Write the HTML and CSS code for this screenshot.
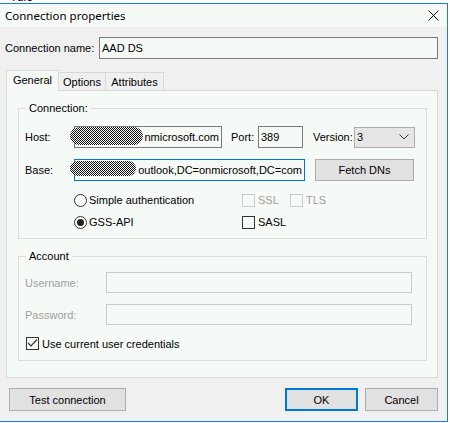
FILE: index.html
```html
<!DOCTYPE html>
<html lang="en">
<head>
    <meta charset="UTF-8">
    <title>Connection properties</title>
    <link rel="stylesheet" href="styles.css">
</head>
<body>
    <div class="behind"><span>Tulo</span></div>

    <div class="window">
        <div class="titlebar">
            <span class="title">Connection properties</span>
            <svg class="close" width="11" height="11" viewBox="0 0 11 11">
                <path d="M0.5 0.5 L10.5 10.5 M10.5 0.5 L0.5 10.5" stroke="#000" stroke-width="1" fill="none"/>
            </svg>
        </div>

        <div class="name-row">
            <label class="name-label">Connection name:</label>
            <div class="input name-input"><span class="value">AAD DS</span></div>
        </div>

        <div class="tabs">
            <div class="tab active">General</div>
            <div class="tab tab-options">Options</div>
            <div class="tab tab-attrs">Attributes</div>
        </div>

        <div class="panel">
            <div class="group">
                <div class="legend">Connection:</div>

                <div class="row host-row">
                    <label class="lbl lbl-main">Host:</label>
                    <div class="input host-input">
                        <span class="value right">nmicrosoft.com</span>
                        <span class="redact redact-host"></span>
                    </div>
                    <label class="lbl lbl-port">Port:</label>
                    <div class="input port-input"><span class="value">389</span></div>
                    <label class="lbl lbl-version">Version:</label>
                    <div class="combo">
                        <span>3</span>
                        <svg width="10" height="6" viewBox="0 0 10 6">
                            <path d="M0.5 0.5 L5 5 L9.5 0.5" stroke="#333" stroke-width="1" fill="none"/>
                        </svg>
                    </div>
                </div>

                <div class="row base-row">
                    <label class="lbl lbl-main">Base:</label>
                    <div class="input base-input focused">
                        <span class="value right">outlook,DC=onmicrosoft,DC=com</span>
                        <span class="redact redact-base"></span>
                    </div>
                    <button class="btn fetch-btn">Fetch DNs</button>
                </div>

                <div class="options">
                    <div class="opt radio-opt">
                        <span class="radio"></span>Simple authentication
                    </div>
                    <div class="opt check-opt disabled">
                        <span class="check"></span>SSL
                    </div>
                    <div class="opt check-opt disabled">
                        <span class="check"></span>TLS
                    </div>
                    <div class="opt radio-opt gss">
                        <span class="radio checked"></span>GSS-API
                    </div>
                    <div class="opt check-opt">
                        <span class="check"></span>SASL
                    </div>
                </div>
            </div>

            <div class="group account">
                <div class="legend">Account</div>

                <div class="row user-row">
                    <label class="lbl lbl-account disabled">Username:</label>
                    <div class="input account-input disabled"></div>
                </div>
                <div class="row pass-row">
                    <label class="lbl lbl-account disabled">Password:</label>
                    <div class="input account-input disabled"></div>
                </div>

                <div class="opt cred-row">
                    <span class="check">
                        <svg width="11" height="11" viewBox="0 0 11 11">
                            <path d="M1 5 L4 8 L10 1.5" stroke="#333" stroke-width="1.2" fill="none"/>
                        </svg>
                    </span>Use current user credentials
                </div>
            </div>
        </div>

        <div class="buttons">
            <button class="btn test-btn">Test connection</button>
            <div class="spacer"></div>
            <button class="btn ok-btn">OK</button>
            <button class="btn cancel-btn">Cancel</button>
        </div>
    </div>
</body>
</html>
```

FILE: styles.css
```css
body {
    margin: 0;
    width: 450px;
    height: 423px;
    overflow: hidden;
    background: #fff;
    font-family: "Liberation Sans", Arial, sans-serif;
    font-size: 11px;
    color: #000;
}

.behind {
    height: 3px;
    overflow: hidden;
    padding-left: 10px;
}
.behind span {
    display: block;
    margin-top: -9px;
    font-size: 12px;
    line-height: 12px;
}

.window {
    box-sizing: border-box;
    width: 448px;
    height: 419px;
    border-top: 1px solid #1c7fd6;
    border-right: 1px solid #1c7fd6;
    border-bottom: 1px solid #1c7fd6;
    background: #f0f0f0;
}

.titlebar {
    height: 23px;
    display: flex;
    align-items: center;
    justify-content: space-between;
    padding: 0 8px 0 5px;
    background: #f6faf6;
}
.title {
    font-family: "Noto Sans", sans-serif;
    font-size: 11.5px;
}

.name-row {
    display: flex;
    align-items: center;
    margin-top: 10px;
}
.name-label {
    width: 94px;
    padding-left: 5px;
}

.input {
    position: relative;
    box-sizing: border-box;
    height: 22px;
    border: 1px solid #7a7a7a;
    background: #f6faf6;
    display: flex;
    align-items: center;
}
.input.focused {
    border-color: #0078d7;
}
.input.disabled {
    border-color: #cccccc;
    height: 21px;
}
.value {
    flex: 1;
    display: flex;
    white-space: nowrap;
    padding: 0 2px;
}
.value.right {
    justify-content: flex-end;
}

.name-input { width: 339px; }

/* scribbled-out part of the values */
.redact {
    position: absolute;
    border-radius: 9px;
    background: repeating-conic-gradient(#111 0 25%, #fff 0 50%) 0 0 / 2px 2px;
}
.redact-host {
    left: -5px;
    top: 0;
    width: 73px;
    height: 18px;
}
.redact-base {
    left: -5px;
    top: 1px;
    width: 66px;
    height: 15px;
}

.tabs {
    display: flex;
    align-items: flex-end;
    height: 20px;
    margin: 11px 0 0 6px;
}
.tab {
    box-sizing: border-box;
    height: 18px;
    border-top: 1px solid #d9d9d9;
    border-right: 1px solid #d9d9d9;
    background: #f0f0f0;
    display: flex;
    align-items: center;
    justify-content: center;
    padding-top: 1px;
}
.tab.active {
    position: relative;
    z-index: 1;
    width: 53px;
    height: 21px;
    margin-bottom: -1px;
    border-left: 1px solid #d9d9d9;
    background: #f6faf6;
    padding: 0 0 3px 0;
}
.tab-options { width: 47px; }
.tab-attrs { width: 58px; }

.panel {
    width: 432px;
    box-sizing: border-box;
    margin-left: 6px;
    border: 1px solid #d9d9d9;
    background: #f6faf6;
    padding: 17px 10px 16px 11px;
}

.group {
    border: 1px solid #dcdcdc;
    padding: 0 0 5px 6px;
}
.group.account {
    margin-top: 17px;
    padding-bottom: 10px;
}
.legend {
    width: max-content;
    margin: -7px 0 0 1px;
    padding: 0 3px;
    line-height: 13px;
    height: 13px;
    background: #f6faf6;
}

.row {
    display: flex;
    align-items: center;
}
.host-row { margin-top: 11px; }
.base-row { margin-top: 10px; }
.user-row { margin-top: 9px; }
.pass-row { margin-top: 11px; }

.lbl-main { width: 49px; }
.lbl-port { width: 27px; margin-left: 9px; }
.lbl-version { width: 41px; margin-left: 10px; }
.lbl-account { width: 81px; }

.host-input { width: 148px; }
.port-input { width: 45px; }
.base-input { width: 231px; }
.account-input { width: 306px; }

.combo {
    box-sizing: border-box;
    width: 61px;
    height: 21px;
    border: 1px solid #adadad;
    background: #e5e5e5;
    display: flex;
    align-items: center;
    justify-content: space-between;
    padding: 0 5px 0 2px;
}

.btn {
    box-sizing: border-box;
    height: 23px;
    border: 1px solid #adadad;
    background: #e1e1e1;
    font-family: inherit;
    font-size: 11px;
    color: #000;
    padding: 0;
}
.fetch-btn {
    width: 99px;
    height: 22px;
    margin: 1px 0 0 10px;
}

.options {
    display: grid;
    grid-template-columns: 168px 48px auto;
    grid-auto-rows: 22px;
    margin: 8px 0 0 49px;
}
.options .gss {
    grid-column: 1;
}
.opt {
    display: flex;
    align-items: center;
}
.radio {
    box-sizing: border-box;
    width: 13px;
    height: 13px;
    border: 1px solid #333;
    border-radius: 50%;
    background: #fff;
    margin-right: 2px;
    display: flex;
    align-items: center;
    justify-content: center;
}
.radio.checked::after {
    content: "";
    width: 7px;
    height: 7px;
    border-radius: 50%;
    background: #222;
}
.check {
    box-sizing: border-box;
    width: 13px;
    height: 13px;
    border: 1px solid #333;
    background: #f6faf6;
    margin-right: 3px;
    display: flex;
    align-items: center;
    justify-content: center;
}
.disabled {
    color: #a0a0a0;
}
.opt.disabled .check {
    border-color: #cccccc;
}

.cred-row {
    margin: 12px 0 0 1px;
    height: 13px;
}

.buttons {
    display: flex;
    margin-top: 10px;
    padding: 0 9px;
    gap: 7px;
}
.spacer { flex: 1; }
.test-btn { width: 117px; }
.ok-btn {
    width: 73px;
    border: 2px solid #0078d7;
}
.cancel-btn { width: 73px; }
```
